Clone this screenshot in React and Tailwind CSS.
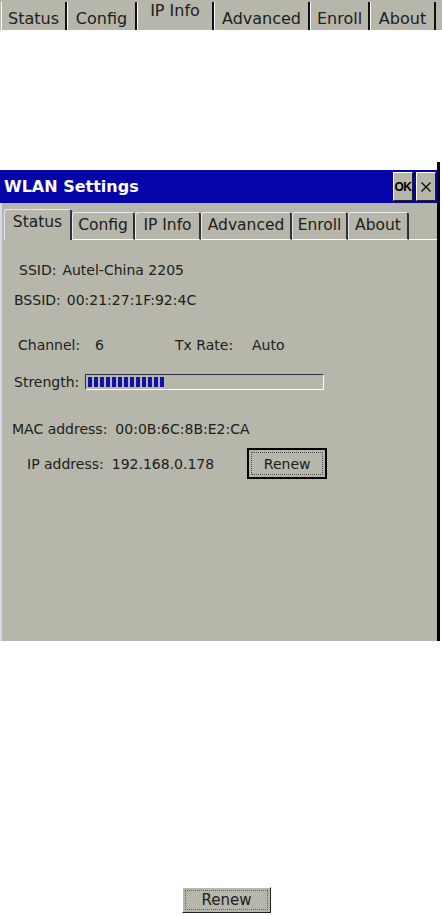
import React from "react";

const font = { fontFamily: '"DejaVu Sans", "Liberation Sans", sans-serif' };

function TopTab({ label, selected, w }) {
  return (
    <div
      className={`flex h-full justify-center border-l border-l-white border-r-2 border-r-[#101010] ${selected ? "items-start pt-[1px]" : "items-end pb-[3px]"}`}
      style={{ width: w }}
    >
      <span className="text-[16px] leading-none text-[#202020]">{label}</span>
    </div>
  );
}

function DlgTab({ label, selected, w }) {
  return (
    <div
      className={`flex justify-center rounded-t-[3px] border-t border-l border-t-[#e8e8f4] border-l-[#e8e8f4] border-r-2 border-r-[#303030] ${selected ? "h-[31px] items-center pb-[4px]" : "h-[28px] items-center border-b border-b-white"}`}
      style={{ width: w }}
    >
      <span className="text-[15.5px] leading-none text-[#202020]">{label}</span>
    </div>
  );
}

export default function App() {
  return (
    <div className="relative h-[916px] w-[442px] overflow-hidden bg-white" style={font}>
      {/* top tab strip */}
      <div className="flex h-[30px] w-[442px] bg-[#b6b6aa] pl-[1px] pt-[2px]">
        <TopTab label="Status" w={66} />
        <TopTab label="Config" w={70} />
        <TopTab label="IP Info" selected w={77} />
        <TopTab label="Advanced" w={96} />
        <TopTab label="Enroll" w={60} />
        <TopTab label="About" w={66} />
      </div>

      {/* dialog */}
      <div className="mt-[132px] flex h-[479px] w-[440px] flex-col border-r-[3px] border-r-black">
        <div className="h-[8px] bg-white" />
        <div className="flex h-[33px] items-center justify-between bg-[#0404a8] pl-[4px] pr-[1px]">
          <span className="text-[16px] font-bold leading-none text-white">WLAN Settings</span>
          <div className="flex h-[29px] gap-[3px]">
            <div className="flex w-[20px] items-center justify-center border border-t-white border-l-white border-r-[#202020] border-b-[#202020] bg-[#b6b6aa]">
              <span className="text-[12px] font-bold leading-none text-black" style={{ letterSpacing: "-0.5px", fontFamily: '"Liberation Sans", sans-serif' }}>OK</span>
            </div>
            <div className="flex w-[20px] items-center justify-center border border-t-white border-l-white border-r-[#202020] border-b-[#202020] bg-[#b6b6aa]">
              <svg width="12" height="12" viewBox="0 0 12 12">
                <path d="M1.5 1.5L10.5 10.5M10.5 1.5L1.5 10.5" stroke="#101010" strokeWidth="1.4" />
              </svg>
            </div>
          </div>
        </div>
        <div className="flex flex-1 flex-col border-l-2 border-l-[#d8d8ec] bg-[#b6b6aa]">
          {/* dialog tabs */}
          <div className="flex items-end pl-[2px] pt-[6px]">
            <DlgTab label="Status" selected w={68} />
            <DlgTab label="Config" w={63} />
            <DlgTab label="IP Info" w={66} />
            <DlgTab label="Advanced" w={91} />
            <DlgTab label="Enroll" w={56} />
            <DlgTab label="About" w={61} />
            <div className="h-[1px] flex-1 bg-white" />
          </div>

          <div className="flex flex-col text-[14px] leading-none text-[#202020]">
            <div className="mt-[23px] ml-[17px] flex gap-[6px]">
              <span>SSID:</span>
              <span>Autel-China 2205</span>
            </div>
            <div className="mt-[16px] ml-[12px] flex gap-[6px]">
              <span>BSSID:</span>
              <span>00:21:27:1F:92:4C</span>
            </div>
            <div className="mt-[31px] ml-[16px] flex">
              <span className="w-[77px]">Channel:</span>
              <span className="w-[80px]">6</span>
              <span className="w-[77px]">Tx Rate:</span>
              <span>Auto</span>
            </div>
            <div className="mt-[22px] ml-[12px] flex items-center gap-[6px]">
              <span>Strength:</span>
              <div className="flex h-[16px] w-[239px] items-center border border-t-[#303040] border-l-[#303040] border-r-white border-b-white bg-[#b6b6aa] pl-[2px]">
                <div className="flex h-[10px] gap-[2px]">
                  {Array.from({ length: 13 }).map((_, i) => (
                    <div key={i} className="h-full w-[4px] bg-[#1010b0]" />
                  ))}
                </div>
              </div>
            </div>
            <div className="mt-[32px] ml-[10px] flex gap-[8px]">
              <span>MAC address:</span>
              <span>00:0B:6C:8B:E2:CA</span>
            </div>
            <div className="mt-[12px] ml-[25px] flex items-center">
              <span className="mr-[8px]">IP address:</span>
              <span className="mr-[33px]">192.168.0.178</span>
              <div className="flex h-[31px] w-[80px] items-center justify-center border-2 border-black bg-[#b6b6aa] p-[2px]">
                <div className="flex h-full w-full items-center justify-center border border-dotted border-[#505050]">
                  <span>Renew</span>
                </div>
              </div>
            </div>
          </div>
        </div>
      </div>

      {/* bottom renew button */}
      <div className="ml-[182px] mt-[246px] flex h-[26px] w-[89px] items-center justify-center border border-t-white border-l-white border-r-[#202020] border-b-[#202020] bg-[#b6b6aa] p-[2px]">
        <div className="flex h-full w-full items-center justify-center border border-dotted border-[#606060]">
          <span className="text-[15px] leading-none text-[#202020]">Renew</span>
        </div>
      </div>
    </div>
  );
}
